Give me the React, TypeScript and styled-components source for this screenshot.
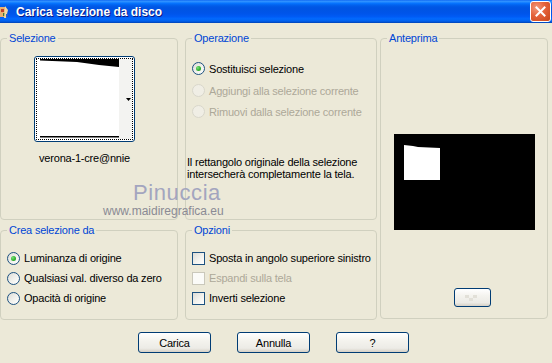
import React from "react";
import styled, { createGlobalStyle } from "styled-components";

const GlobalStyle = createGlobalStyle`
  html, body {
    margin: 0;
    padding: 0;
    background: #ece9d8;
  }
  body {
    font-family: "Liberation Sans", Arial, sans-serif;
    font-size: 11px;
    color: #000;
  }
`;

const Window = styled.div`
  position: relative;
  width: 552px;
  height: 363px;
  background: #ece9d8;
  overflow: hidden;
`;

const TitleBar = styled.div`
  height: 23px;
  display: flex;
  align-items: center;
  background: linear-gradient(
    180deg,
    #0058ee 0%,
    #3593ff 4%,
    #288eff 8%,
    #127dff 12%,
    #036ffc 16%,
    #0262ee 22%,
    #0057e5 30%,
    #0054e3 40%,
    #0055eb 60%,
    #005bf5 72%,
    #026afe 82%,
    #0062ef 90%,
    #0052d6 96%,
    #0040ab 100%
  );
`;

const Title = styled.span`
  margin-left: 7px;
  color: #fff;
  font-weight: bold;
  font-size: 12px;
  text-shadow: 1px 1px 0 #0a1883;
`;

const CloseButton = styled.div`
  margin-left: auto;
  margin-right: 1px;
  width: 21px;
  height: 21px;
  box-sizing: border-box;
  border: 1px solid #fff;
  border-radius: 3px;
  background: radial-gradient(circle at 30% 30%, #f39a7c 0%, #e4623a 45%, #c94619 100%);
  display: flex;
  align-items: center;
  justify-content: center;
`;

const Body = styled.div`
  padding-top: 9px;
  letter-spacing: -0.2px;
`;

const Panels = styled.div`
  display: flex;
  align-items: flex-start;
`;

const LeftGrid = styled.div`
  display: grid;
  grid-template-columns: 178px 192px;
  grid-template-rows: 188px 96px;
  column-gap: 7px;
  row-gap: 4px;
`;

const Group = styled.fieldset<{ $width?: number; $height?: number }>`
  margin: 0;
  padding: 0;
  min-width: 0;
  box-sizing: border-box;
  border: 1px solid #d0d0bf;
  border-radius: 4px;
  ${(p) => (p.$width ? `width: ${p.$width}px;` : "")}
  ${(p) => (p.$height ? `height: ${p.$height}px;` : "")}
`;

const Legend = styled.legend`
  margin-left: 6px;
  padding: 0 2px;
  color: #0046d5;
  font-size: 11px;
  line-height: 13px;
`;

const SelectionBody = styled.div`
  display: flex;
  flex-direction: column;
  align-items: center;
  padding: 11px 9px 0 0;
`;

const Thumb = styled.div`
  width: 101px;
  height: 86px;
  box-sizing: border-box;
  border: 1px solid #003c74;
  border-radius: 3px;
  padding: 1px;
  background: #fff;
  display: flex;
`;

const FocusRect = styled.div`
  flex: 1;
  border: 1px dotted #000;
  display: flex;
`;

const FileName = styled.div`
  margin-top: 10px;
  line-height: 13px;
`;

const OptionsBody = styled.div<{ $top: number }>`
  padding: ${(p) => p.$top}px 0 0 1px;
  display: flex;
  flex-direction: column;
`;

const Row = styled.div<{ $height?: number; $disabled?: boolean }>`
  height: ${(p) => p.$height ?? 20}px;
  display: flex;
  align-items: center;
  gap: 4px;
  margin-left: 5px;
  white-space: nowrap;
  color: ${(p) => (p.$disabled ? "#aca899" : "#000")};
`;

const RadioMark = styled.span<{ $checked?: boolean; $disabled?: boolean }>`
  width: 13px;
  height: 13px;
  flex: none;
  box-sizing: border-box;
  border-radius: 50%;
  border: 1px solid ${(p) => (p.$disabled ? "#d9d7cb" : "#1c5180")};
  background: ${(p) =>
    p.$disabled
      ? "#f0eee5"
      : "linear-gradient(135deg, #dcdcd7 0%, #f2f2ee 55%, #ffffff 100%)"};
  display: flex;
  align-items: center;
  justify-content: center;

  &::after {
    content: "";
    display: ${(p) => (p.$checked ? "block" : "none")};
    width: 5px;
    height: 5px;
    border-radius: 50%;
    background: radial-gradient(circle at 35% 35%, #7be07b 0%, #2fb32f 55%, #1a8a1a 100%);
  }
`;

const CheckMark = styled.span<{ $disabled?: boolean }>`
  width: 13px;
  height: 13px;
  flex: none;
  box-sizing: border-box;
  border: 1px solid ${(p) => (p.$disabled ? "#cac8bb" : "#1c5180")};
  background: ${(p) =>
    p.$disabled ? "#fbfbf8" : "linear-gradient(135deg, #dcdcd7 0%, #f2f2ee 55%, #ffffff 100%)"};
`;

const Note = styled.p`
  margin: 34px 0 0 0;
  line-height: 12px;
`;

const Preview = styled.div`
  margin-left: 3px;
`;

const PreviewBody = styled.div`
  display: flex;
  flex-direction: column;
  align-items: center;
  padding-top: 89px;
`;

const PreviewCanvas = styled.div`
  width: 141px;
  height: 96px;
  background: #000;
  display: flex;
`;

const XpButton = styled.div<{ $width: number; $height?: number }>`
  width: ${(p) => p.$width}px;
  height: ${(p) => p.$height ?? 21}px;
  box-sizing: border-box;
  border: 1px solid #003c74;
  border-radius: 3px;
  background: linear-gradient(180deg, #ffffff 0%, #f4f3ee 40%, #ecebe6 80%, #d6d0c5 100%);
  display: flex;
  align-items: center;
  justify-content: center;
  color: #000;
`;

const ZoomButton = styled(XpButton)`
  margin-top: 58px;
  margin-left: 16px;
`;

const ButtonRow = styled.div`
  display: flex;
  gap: 26px;
  margin-top: 12px;
  padding-left: 138px;
`;

const Watermark = styled.div`
  position: absolute;
  left: 103px;
  top: 181px;
  display: flex;
  flex-direction: column;
  pointer-events: none;
`;

const WatermarkName = styled.span`
  margin-left: 30px;
  font-size: 22px;
  line-height: 23px;
  color: #a3a5bf;
  letter-spacing: 0.6px;
`;

const WatermarkSite = styled.span`
  font-size: 12px;
  line-height: 14px;
  color: #8a8a94;
`;

function AppIcon() {
  return (
    <svg width="9" height="16" viewBox="0 0 9 16">
      <rect x="0" y="3" width="6" height="10" fill="#e8b070" />
      <rect x="1" y="5" width="3" height="3" fill="#c0402a" />
      <rect x="3" y="9" width="3" height="3" fill="#3a7a3a" />
      <path d="M5 2 L8 6 L6 14 L4 14 Z" fill="#f0d8a0" />
      <rect x="6" y="10" width="2" height="3" fill="#2a5cc8" />
    </svg>
  );
}

function CloseIcon() {
  return (
    <svg width="11" height="11" viewBox="0 0 11 11">
      <path d="M1.5 1.5 L9.5 9.5 M9.5 1.5 L1.5 9.5" stroke="#fff" strokeWidth="2" strokeLinecap="square" />
    </svg>
  );
}

function SelectionThumb() {
  return (
    <svg width="95" height="80" viewBox="0 0 95 80">
      <rect x="0" y="0" width="95" height="80" fill="#fff" />
      <rect x="82" y="0" width="13" height="80" fill="#f3f3f1" />
      <path d="M3 0 L82 0 L82 8 L62 6 L40 3 L3 1.5 Z" fill="#000" />
      <rect x="3" y="77" width="79" height="1.5" fill="#000" />
      <path d="M89 39 L94 39 L91.5 42 Z" fill="#000" />
    </svg>
  );
}

function PreviewShape() {
  return (
    <svg width="141" height="96" viewBox="0 0 141 96">
      <path d="M10 11 L19 12 L24 13 L46 14 L46 46 L10 46 Z" fill="#fff" />
    </svg>
  );
}

function ChecksIcon() {
  return (
    <svg width="18" height="10" viewBox="0 0 18 10">
      <rect x="2" y="2" width="4" height="3" fill="#e2e0d8" />
      <rect x="10" y="2" width="4" height="3" fill="#e2e0d8" />
      <rect x="6" y="5" width="4" height="3" fill="#e2e0d8" />
    </svg>
  );
}

export default function App() {
  return (
    <>
      <GlobalStyle />
      <Window>
        <TitleBar>
          <AppIcon />
          <Title>Carica selezione da disco</Title>
          <CloseButton>
            <CloseIcon />
          </CloseButton>
        </TitleBar>

        <Body>
          <Panels>
            <LeftGrid>
              <Group>
                <Legend>Selezione</Legend>
                <SelectionBody>
                  <Thumb>
                    <FocusRect>
                      <SelectionThumb />
                    </FocusRect>
                  </Thumb>
                  <FileName>verona-1-cre@nnie</FileName>
                </SelectionBody>
              </Group>

              <Group>
                <Legend>Operazione</Legend>
                <OptionsBody $top={12}>
                  <Row $height={23}>
                    <RadioMark $checked />
                    Sostituisci selezione
                  </Row>
                  <Row $height={21} $disabled>
                    <RadioMark $disabled />
                    Aggiungi alla selezione corrente
                  </Row>
                  <Row $height={21} $disabled>
                    <RadioMark $disabled />
                    Rimuovi dalla selezione corrente
                  </Row>
                  <Note>
                    Il rettangolo originale della selezione
                    <br />
                    intersecherà completamente la tela.
                  </Note>
                </OptionsBody>
              </Group>

              <Group>
                <Legend>Crea selezione da</Legend>
                <OptionsBody $top={11}>
                  <Row>
                    <RadioMark $checked />
                    Luminanza di origine
                  </Row>
                  <Row>
                    <RadioMark />
                    Qualsiasi val. diverso da zero
                  </Row>
                  <Row>
                    <RadioMark />
                    Opacità di origine
                  </Row>
                </OptionsBody>
              </Group>

              <Group>
                <Legend>Opzioni</Legend>
                <OptionsBody $top={11}>
                  <Row>
                    <CheckMark />
                    Sposta in angolo superiore sinistro
                  </Row>
                  <Row $disabled>
                    <CheckMark $disabled />
                    Espandi sulla tela
                  </Row>
                  <Row>
                    <CheckMark />
                    Inverti selezione
                  </Row>
                </OptionsBody>
              </Group>
            </LeftGrid>

            <Preview>
              <Group $width={168} $height={287}>
                <Legend>Anteprima</Legend>
                <PreviewBody>
                  <PreviewCanvas>
                    <PreviewShape />
                  </PreviewCanvas>
                  <ZoomButton $width={37} $height={19}>
                    <ChecksIcon />
                  </ZoomButton>
                </PreviewBody>
              </Group>
            </Preview>
          </Panels>

          <ButtonRow>
            <XpButton $width={73}>Carica</XpButton>
            <XpButton $width={73}>Annulla</XpButton>
            <XpButton $width={73}>?</XpButton>
          </ButtonRow>
        </Body>

        <Watermark>
          <WatermarkName>Pinuccia</WatermarkName>
          <WatermarkSite>www.maidiregrafica.eu</WatermarkSite>
        </Watermark>
      </Window>
    </>
  );
}
